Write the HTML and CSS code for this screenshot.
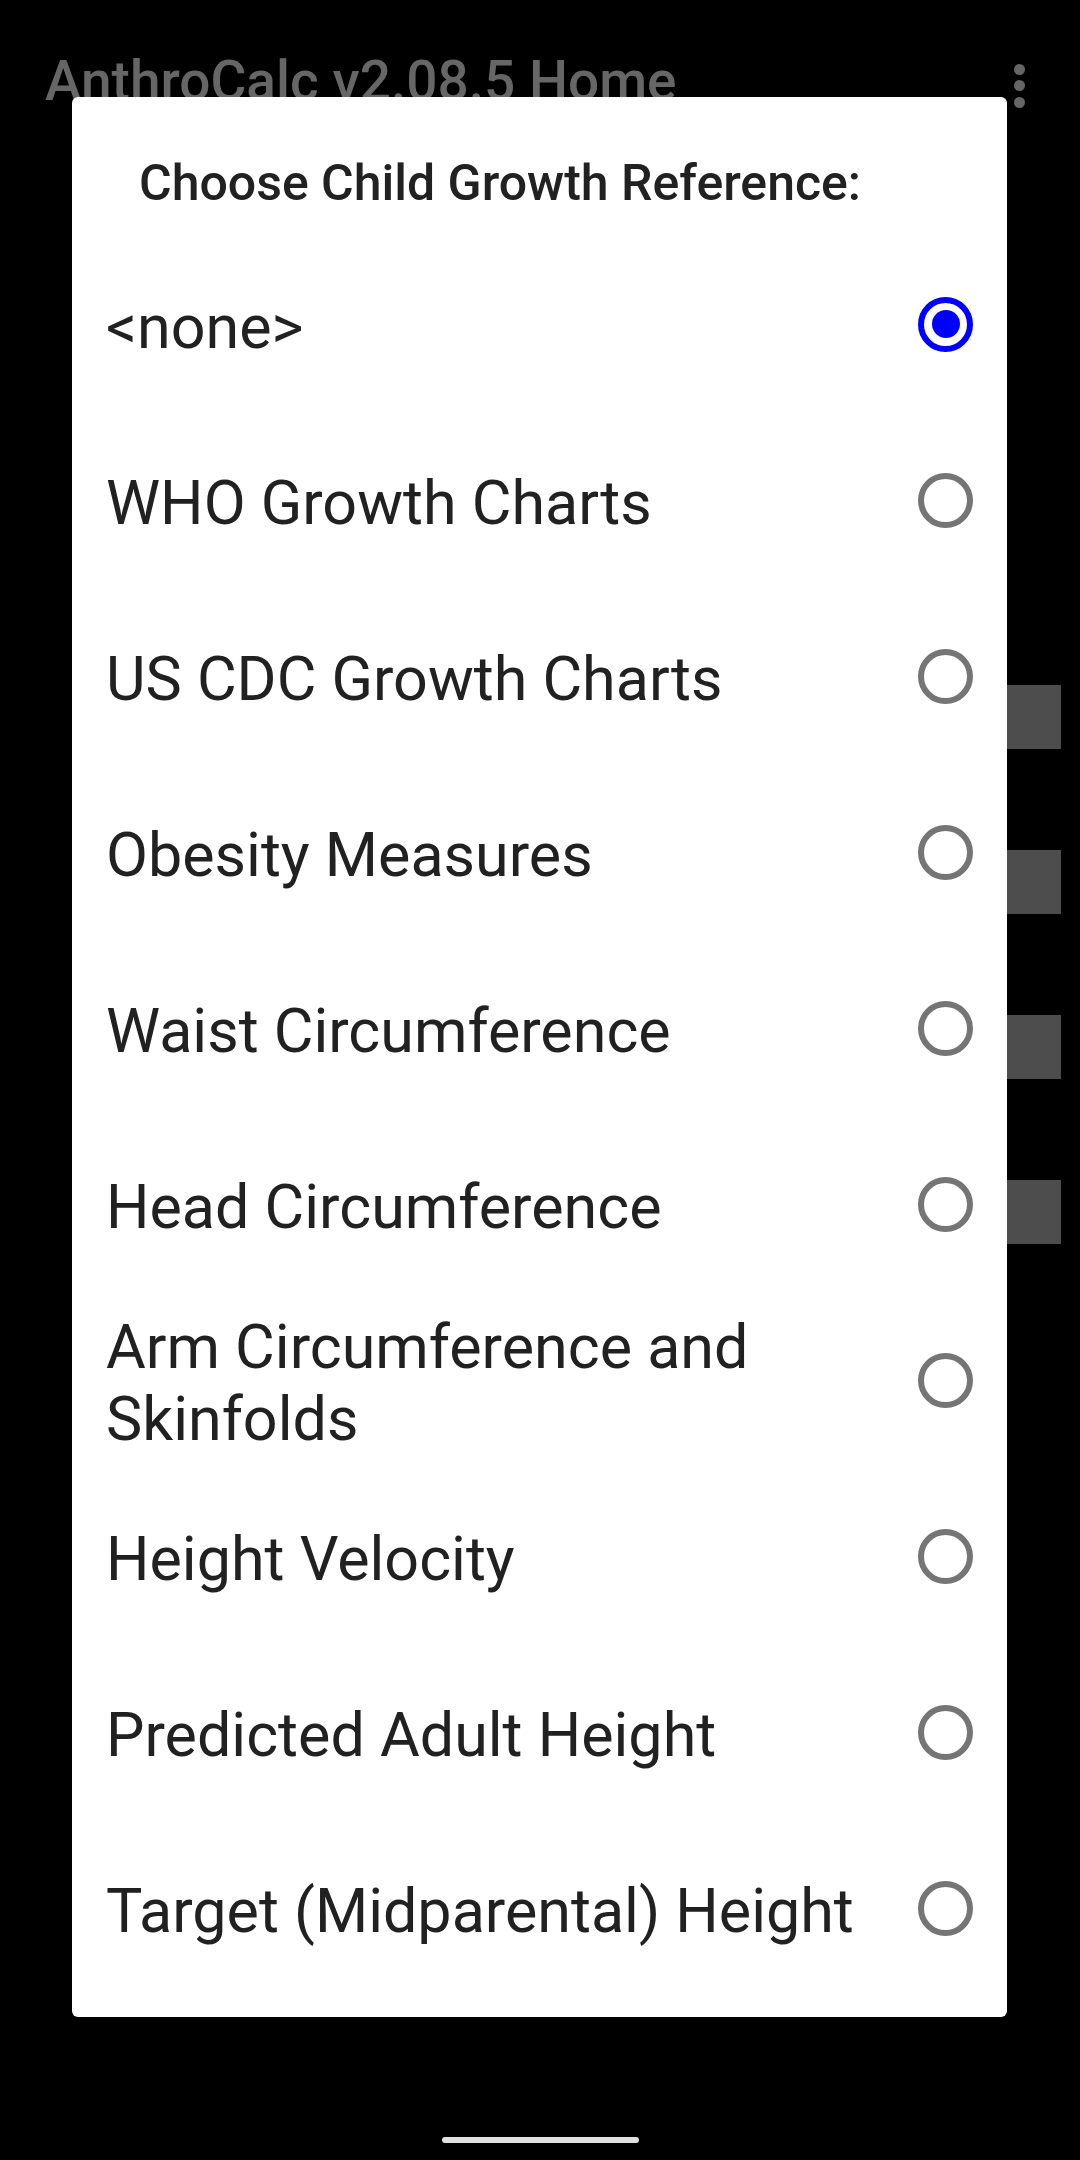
FILE: index.html
```html
<!DOCTYPE html>
<html>
<head>
<meta charset="utf-8">
<link rel="stylesheet" href="styles.css">
</head>
<body>
<div class="screen">
  <header class="appbar">
    <div class="apptitle">AnthroCalc v2.08.5 Home</div>
    <div class="overflow"><span></span><span></span><span></span></div>
  </header>
  <main class="content">
    <div class="btn"></div>
    <div class="btn"></div>
    <div class="btn"></div>
    <div class="btn"></div>
  </main>
  <div class="navbar"><div class="handle"></div></div>

  <div class="dialog">
    <div class="dtitle">Choose Child Growth Reference:</div>
    <ul class="options">
      <li class="opt"><span class="label">&lt;none&gt;</span><span class="radio checked"></span></li>
      <li class="opt"><span class="label">WHO Growth Charts</span><span class="radio"></span></li>
      <li class="opt"><span class="label">US CDC Growth Charts</span><span class="radio"></span></li>
      <li class="opt"><span class="label">Obesity Measures</span><span class="radio"></span></li>
      <li class="opt"><span class="label">Waist Circumference</span><span class="radio"></span></li>
      <li class="opt"><span class="label">Head Circumference</span><span class="radio"></span></li>
      <li class="opt"><span class="label">Arm Circumference and Skinfolds</span><span class="radio"></span></li>
      <li class="opt"><span class="label">Height Velocity</span><span class="radio"></span></li>
      <li class="opt"><span class="label">Predicted Adult Height</span><span class="radio"></span></li>
      <li class="opt"><span class="label">Target (Midparental) Height</span><span class="radio"></span></li>
    </ul>
  </div>
</div>
</body>
</html>
```

FILE: styles.css
```css
* { box-sizing: border-box; }
html, body {
  margin: 0;
  padding: 0;
  background: #000;
}
body {
  font-family: Roboto, "Noto Sans", sans-serif;
  width: 1080px;
  height: 2160px;
  overflow: hidden;
}
.screen {
  position: relative;
  width: 1080px;
  height: 2160px;
  background: #000;
  display: flex;
  flex-direction: column;
}
.appbar {
  display: flex;
  align-items: flex-start;
  justify-content: space-between;
  padding: 49px 0 0 45px;
  height: 160px;
}
.apptitle {
  font-size: 55px;
  font-weight: 500;
  color: #666;
  line-height: normal;
  letter-spacing: 0;
}
.overflow {
  display: flex;
  flex-direction: column;
  gap: 5.5px;
  margin: 14.5px 55.5px 0 0;
}
.overflow span {
  display: block;
  width: 11px;
  height: 11px;
  border-radius: 50%;
  background: #666;
}
.content {
  flex: 1;
  display: flex;
  flex-direction: column;
  align-items: flex-end;
  padding: 525px 19px 0 0;
  gap: 101px;
}
.btn {
  width: 380px;
  height: 64px;
  background: #4d4d4d;
}
.navbar {
  height: 60px;
  display: flex;
  justify-content: center;
  padding-top: 37px;
}
.handle {
  width: 197px;
  height: 6px;
  border-radius: 3px;
  background: #e0e0e0;
}
.dialog {
  position: absolute;
  left: 72px;
  top: 97px;
  width: 935px;
  height: 1920px;
  background: #fff;
  border-radius: 6px;
  padding: 57px 34px 20px 34px;
}
.dtitle {
  font-size: 50px;
  font-weight: 500;
  color: #212121;
  line-height: normal;
  padding: 0 0 23px 33px;
  height: 82px;
}
.options {
  list-style: none;
  margin: 0;
  padding: 0;
}
.opt {
  height: 176px;
  display: flex;
  align-items: center;
  justify-content: space-between;
  gap: 40px;
}
.label {
  flex: 1;
  font-size: 61px;
  line-height: normal;
  color: #212121;
  padding-top: 6px;
}
.radio {
  flex: none;
  width: 55px;
  height: 55px;
  border-radius: 50%;
  border: 6px solid #757575;
  display: flex;
  align-items: center;
  justify-content: center;
}
.radio.checked {
  border-color: #0000ff;
}
.radio.checked::after {
  content: "";
  width: 28px;
  height: 28px;
  border-radius: 50%;
  background: #0000ff;
}
```
